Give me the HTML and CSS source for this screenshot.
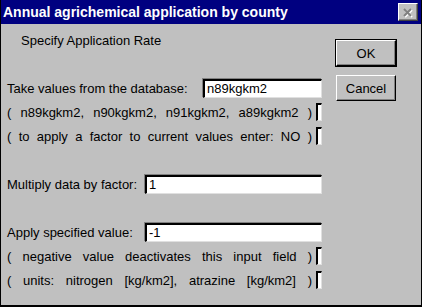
FILE: index.html
```html
<!DOCTYPE html>
<html lang="en">
<head>
  <meta charset="UTF-8" />
  <title>Annual agrichemical application by county</title>
  <link rel="stylesheet" href="styles.css">
</head>
<body>
  <div class="window">
    <div class="titlebar">
      <span class="title">Annual agrichemical application by county</span>
      <span class="close">
        <svg width="12" height="11" viewBox="0 0 12 11">
          <path d="M2 2 L9 9 M9 2 L2 9" stroke="#fff" stroke-width="2" transform="translate(1,1)"/>
          <path d="M2 2 L9 9 M9 2 L2 9" stroke="#808080" stroke-width="2"/>
        </svg>
      </span>
    </div>

    <div class="client">
      <div class="form">
        <div class="row heading">Specify Application Rate</div>
        <div class="row"></div>

        <div class="row">
          <label class="label">Take values from the database:</label>
          <input class="field short" type="text" value="n89kgkm2">
        </div>
        <div class="row">
          <span class="note">( n89kgkm2, n90kgkm2, n91kgkm2, a89kgkm2 )</span>
          <span class="stub"></span>
        </div>
        <div class="row">
          <span class="note">( to apply a factor to current values enter: NO )</span>
          <span class="stub"></span>
        </div>
        <div class="row"></div>

        <div class="row">
          <label class="label">Multiply data by factor:</label>
          <input class="field long" type="text" value="1">
        </div>
        <div class="row"></div>

        <div class="row">
          <label class="label">Apply specified value:</label>
          <input class="field long" type="text" value="-1">
        </div>
        <div class="row">
          <span class="note">( negative value deactivates this input field )</span>
          <span class="stub"></span>
        </div>
        <div class="row">
          <span class="note">( units: nitrogen [kg/km2], atrazine [kg/km2] )</span>
          <span class="stub"></span>
        </div>
      </div>

      <div class="buttons">
        <button class="btn default">OK</button>
        <button class="btn">Cancel</button>
      </div>
    </div>
  </div>
</body>
</html>
```

FILE: styles.css
```css
* {
  margin: 0;
  padding: 0;
  box-sizing: border-box;
}
body {
  font-family: "Liberation Sans", Arial, sans-serif;
  font-size: 13px;
  color: #000;
  background: #c0c0c0;
}
.window {
  width: 422px;
  height: 307px;
  background: #c0c0c0;
  border-left: 1px solid #000;
  border-right: 1px solid #000;
  border-bottom: 2px solid #000;
  display: flex;
  flex-direction: column;
}
.titlebar {
  height: 24px;
  background: #000080;
  color: #fff;
  display: flex;
  align-items: center;
  justify-content: space-between;
  padding: 0 3px 0 2px;
}
.title {
  font-weight: bold;
  font-size: 14px;
}
.close {
  width: 20px;
  height: 18px;
  background: #c0c0c0;
  border-top: 1px solid #fff;
  border-left: 1px solid #fff;
  border-right: 1px solid #404040;
  border-bottom: 1px solid #404040;
  box-shadow: inset -1px -1px 0 #808080;
  display: flex;
  align-items: center;
  justify-content: center;
}

.client {
  display: flex;
  flex: 1;
  padding: 4px 0 0 6px;
}
.form {
  width: 315px;
}
.row {
  height: 24px;
  display: flex;
  align-items: center;
  justify-content: space-between;
}
.heading {
  padding-left: 14px;
}
.label {
  white-space: nowrap;
}
.field {
  height: 19px;
  font-family: inherit;
  font-size: 13px;
  padding: 0 2px;
  background: #fff;
  border-top: 2px solid #000;
  border-left: 2px solid #000;
  border-right: 1px solid #e0e0e0;
  border-bottom: 1px solid #e0e0e0;
  box-shadow: -1px -1px 0 #808080;
  outline: none;
}
.short {
  width: 119px;
}
.long {
  width: 177px;
}
.note {
  flex: 1;
  text-align: justify;
  text-align-last: justify;
  margin-right: 4px;
}
.stub {
  width: 6px;
  height: 18px;
  background: #fff;
  border-top: 2px solid #000;
  border-left: 2px solid #000;
  border-right: 1px solid #e0e0e0;
  border-bottom: 1px solid #e0e0e0;
}

.buttons {
  display: flex;
  flex-direction: column;
  margin: 12px 0 0 14px;
  gap: 9px;
}
.btn {
  width: 60px;
  height: 26px;
  font-family: inherit;
  font-size: 13px;
  background: #c0c0c0;
  border-top: 1px solid #fff;
  border-left: 1px solid #fff;
  border-right: 1px solid #000;
  border-bottom: 1px solid #000;
  box-shadow: inset -1px -1px 0 #808080;
}
.default {
  outline: 1px solid #000;
}
```
